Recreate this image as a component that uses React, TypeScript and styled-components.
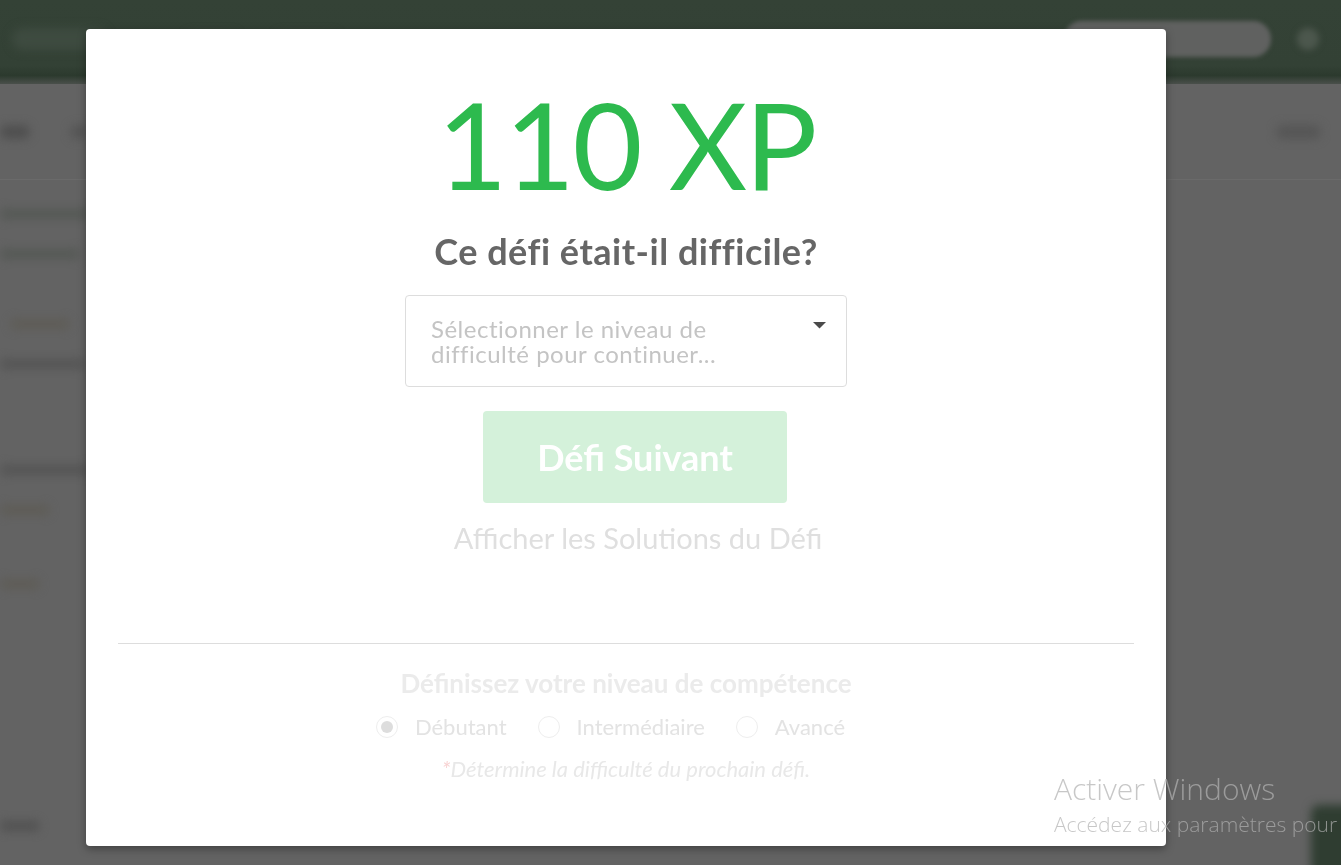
import React from "react";
import styled, { createGlobalStyle } from "styled-components";

const GlobalStyle = createGlobalStyle`
  html, body {
    margin: 0;
    padding: 0;
    background: #636363;
  }
  body {
    font-family: Lato, "Liberation Sans", sans-serif;
    overflow: hidden;
  }
  * { box-sizing: border-box; }
`;

/* ---------- blurred background page ---------- */

const Page = styled.div`
  width: 100vw;
  height: 100vh;
  display: flex;
  flex-direction: column;
  background: #636363;
  overflow: hidden;
`;

const TopBar = styled.header`
  height: 84px;
  flex: none;
  display: flex;
  align-items: center;
  padding: 0 22px 6px 12px;
  background: linear-gradient(#344236 0%, #334135 78%, #2c3a2e 90%, #4a4f4b 100%);
`;

const Smudge = styled.div<{ w: number; h: number; c: string; ml?: number }>`
  width: ${(p) => p.w}px;
  height: ${(p) => p.h}px;
  background: ${(p) => p.c};
  margin-left: ${(p) => p.ml ?? 0}px;
  border-radius: ${(p) => p.h / 2}px;
  filter: blur(5px);
  flex: none;
`;

const Spacer = styled.div`
  flex: 1;
`;

const SearchPill = styled.div`
  width: 207px;
  height: 36px;
  border-radius: 18px;
  background: #606160;
  filter: blur(2px);
  margin-right: 26px;
`;

const Avatar = styled.div`
  width: 22px;
  height: 22px;
  border-radius: 50%;
  background: #4c574d;
  filter: blur(3px);
`;

const SubBar = styled.div`
  height: 96px;
  flex: none;
  display: flex;
  align-items: center;
  padding: 0 20px 0 0;
  border-bottom: 1px solid #6a6a6a;
`;

const Content = styled.div`
  display: flex;
  flex-direction: column;
  align-items: flex-start;
  padding-top: 28px;
`;

const Line = styled.div<{ w: number; mt: number; c: string; ml?: number }>`
  width: ${(p) => p.w}px;
  height: 12px;
  margin-top: ${(p) => p.mt}px;
  margin-left: ${(p) => p.ml ?? 0}px;
  background: ${(p) => p.c};
  border-radius: 6px;
  filter: blur(4px);
`;

const CornerBlob = styled.div`
  position: fixed;
  right: -20px;
  bottom: -10px;
  width: 50px;
  height: 70px;
  background: #2f3d31;
  border-radius: 8px;
  filter: blur(5px);
`;

/* ---------- modal ---------- */

const Modal = styled.div`
  position: fixed;
  top: 29px;
  left: 86px;
  width: 1080px;
  height: 817px;
  background: #ffffff;
  border-radius: 4px;
  box-shadow: 0 3px 9px rgba(0, 0, 0, 0.35);
  display: flex;
  flex-direction: column;
  align-items: center;
  padding: 55px 32px 0;
  text-align: center;
`;

const XpValue = styled.div`
  font-size: 121px;
  line-height: 120px;
  font-weight: 400;
  letter-spacing: -2.5px;
  color: #2dba4e;
`;

const Question = styled.h2`
  margin: 25px 0 0;
  font-size: 36px;
  line-height: 44px;
  font-weight: 700;
  letter-spacing: 0.5px;
  color: #666666;
`;

const Select = styled.div`
  margin-top: 22px;
  width: 442px;
  height: 92px;
  border: 1px solid #dddddd;
  border-radius: 4px;
  padding: 20px 20px 0 25px;
  display: flex;
  align-items: flex-start;
  justify-content: space-between;
  text-align: left;
  cursor: pointer;
`;

const Placeholder = styled.span`
  max-width: 300px;
  font-size: 24px;
  line-height: 25px;
  letter-spacing: 0.5px;
  color: #c4c4c4;
  font-variant-ligatures: none;
`;

const Caret = styled.svg`
  flex: none;
  margin-top: 6px;
`;

const NextButton = styled.button`
  margin-top: 24px;
  margin-left: 18px;
  width: 304px;
  height: 92px;
  border: none;
  border-radius: 4px;
  background: #d4f1da;
  color: #ffffff;
  font-family: Lato, "Liberation Sans", sans-serif;
  font-size: 36px;
  font-weight: 700;
`;

const SolutionsLink = styled.a`
  margin-top: 18px;
  margin-left: 24px;
  font-size: 29px;
  line-height: 34px;
  color: #dfdfdf;
  text-decoration: none;
`;

const Divider = styled.hr`
  margin: 88px 0 0;
  align-self: stretch;
  height: 1px;
  border: none;
  background: #dddddd;
`;

const SkillTitle = styled.h3`
  margin: 24px 0 0;
  font-size: 26px;
  line-height: 30px;
  font-weight: 700;
  color: #ebebeb;
`;

const RadioRow = styled.div`
  margin-top: 16px;
  display: flex;
  align-items: center;
  height: 26px;
`;

const RadioOption = styled.label`
  display: flex;
  align-items: center;
  gap: 17px;
  margin-right: 31px;
`;

const RadioCircle = styled.span<{ checked?: boolean }>`
  width: 22px;
  height: 22px;
  border-radius: 50%;
  border: 1px solid #eeeeee;
  display: flex;
  align-items: center;
  justify-content: center;
  &::after {
    content: "";
    width: 12px;
    height: 12px;
    border-radius: 50%;
    background: ${(p) => (p.checked ? "#dddddd" : "transparent")};
  }
`;

const RadioLabel = styled.span`
  font-size: 22px;
  line-height: 26px;
  color: #e3e3e3;
`;

const Note = styled.p`
  margin: 17px 0 0;
  font-size: 22px;
  line-height: 24px;
  font-style: italic;
  color: #e8e8e8;
`;

const Asterisk = styled.span`
  color: #f8d2d2;
`;

/* ---------- windows watermark ---------- */

const Watermark = styled.div`
  position: fixed;
  left: 1054px;
  top: 769px;
  color: rgba(178, 178, 178, 0.72);
  font-family: "Open Sans", "Noto Sans", sans-serif;
  font-weight: 300;
  white-space: nowrap;
  pointer-events: none;
`;

const WatermarkTitle = styled.div`
  font-size: 30px;
  line-height: 40px;
`;

const WatermarkSub = styled.div`
  font-size: 21px;
  line-height: 30px;
`;

export default function App() {
  return (
    <>
      <GlobalStyle />
      <Page>
        <TopBar>
          <Smudge w={95} h={22} c="#3e4b40" />
          <Smudge w={50} h={12} c="#3a473c" ml={80} />
          <Smudge w={60} h={12} c="#3a473c" ml={40} />
          <Spacer />
          <SearchPill />
          <Avatar />
        </TopBar>
        <SubBar>
          <Smudge w={30} h={14} c="#4f4f4f" ml={0} />
          <Smudge w={18} h={14} c="#555555" ml={40} />
          <Spacer />
          <Smudge w={45} h={14} c="#565656" />
        </SubBar>
        <Content>
          <Line w={90} mt={0} c="#575a57" />
          <Line w={80} mt={28} c="#575a57" />
          <Line w={60} mt={58} c="#5f5d58" ml={10} />
          <Line w={85} mt={28} c="#575757" />
          <Line w={90} mt={94} c="#575757" />
          <Line w={50} mt={28} c="#5f5d58" />
          <Line w={40} mt={62} c="#5f5d58" />
          <Line w={40} mt={230} c="#545454" />
        </Content>
        <CornerBlob />
      </Page>

      <Modal>
        <XpValue>110 XP</XpValue>
        <Question>Ce défi était-il difficile?</Question>
        <Select>
          <Placeholder>Sélectionner le niveau de difficulté pour continuer...</Placeholder>
          <Caret width="13" height="7" viewBox="0 0 13 7">
            <path d="M0 0 H13 L6.5 6.5 Z" fill="#4a4a4a" />
          </Caret>
        </Select>
        <NextButton>Défi Suivant</NextButton>
        <SolutionsLink>Afficher les Solutions du Défi</SolutionsLink>
        <Divider />
        <SkillTitle>Définissez votre niveau de compétence</SkillTitle>
        <RadioRow>
          <RadioOption>
            <RadioCircle checked />
            <RadioLabel>Débutant</RadioLabel>
          </RadioOption>
          <RadioOption>
            <RadioCircle />
            <RadioLabel>Intermédiaire</RadioLabel>
          </RadioOption>
          <RadioOption>
            <RadioCircle />
            <RadioLabel>Avancé</RadioLabel>
          </RadioOption>
        </RadioRow>
        <Note>
          <Asterisk>*</Asterisk>Détermine la difficulté du prochain défi.
        </Note>
      </Modal>

      <Watermark>
        <WatermarkTitle>Activer Windows</WatermarkTitle>
        <WatermarkSub>Accédez aux paramètres pour</WatermarkSub>
      </Watermark>
    </>
  );
}
